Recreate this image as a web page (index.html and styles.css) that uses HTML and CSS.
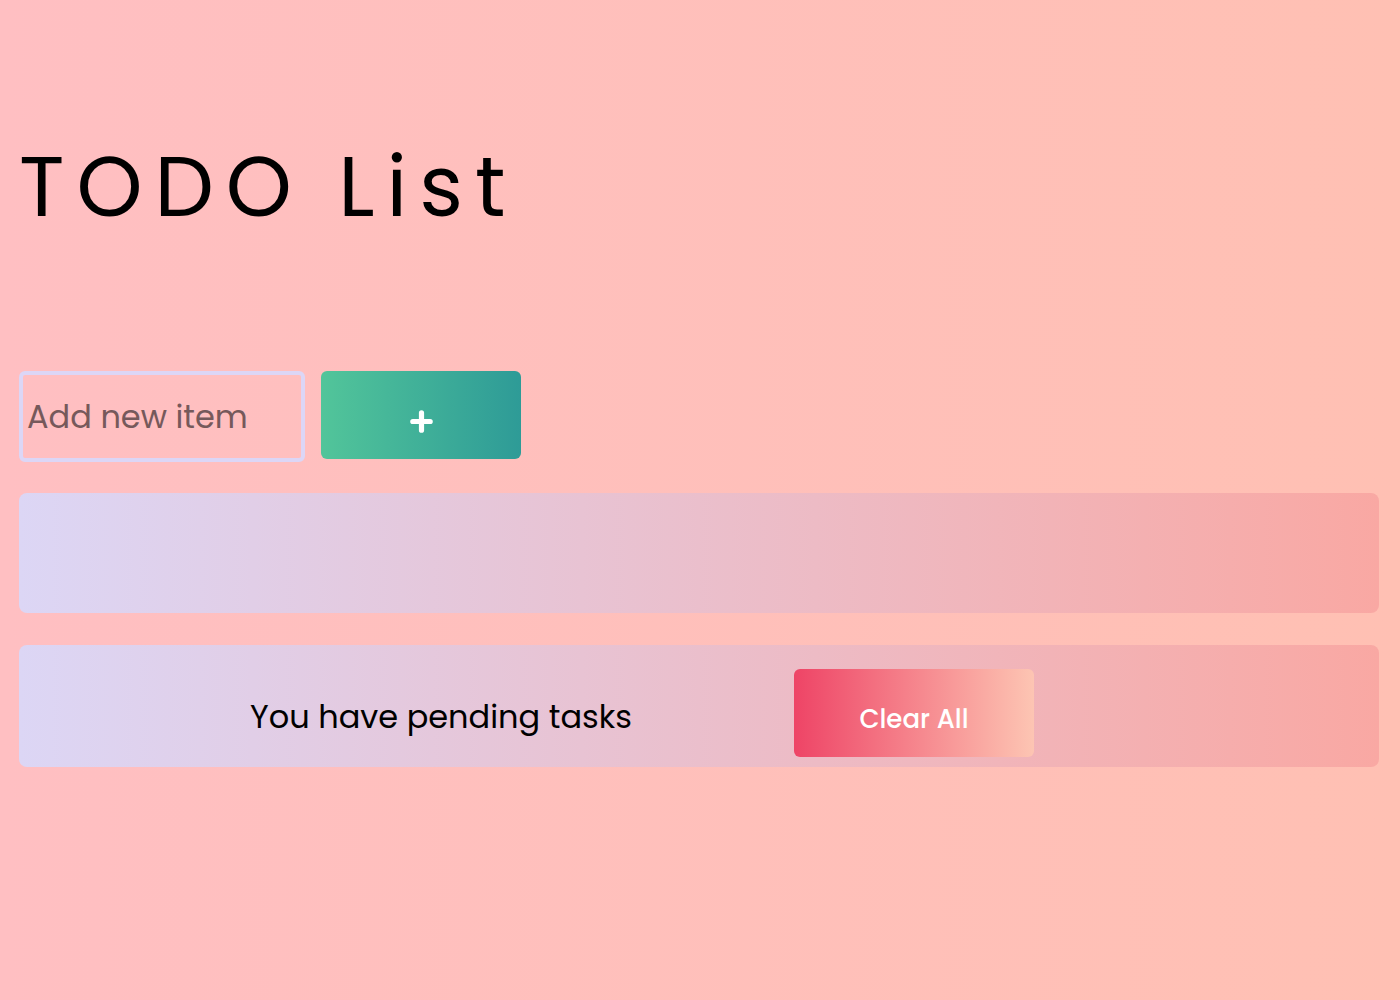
FILE: index.html
```html
<!DOCTYPE html>
<html lang="en">
<head>
<meta charset="utf-8">
<title>TODO List</title>
<link rel="stylesheet" href="styles.css">
</head>
<body>
<main class="app">
  <h1 class="title">TODO List</h1>
  <form class="add-row">
    <input class="add-input" type="text" placeholder="Add new item">
    <button class="add-btn" type="button">
      <svg width="23" height="23" viewBox="0 0 23 23" aria-hidden="true"><path d="M11.5 2.8v17.4M2.8 11.5h17.4" stroke="#fff" stroke-width="5.2" stroke-linecap="round"/></svg>
    </button>
  </form>
  <ul class="list"></ul>
  <div class="footer">
    <span class="pending">You have pending tasks</span>
    <button class="clear-btn" type="button">Clear All</button>
  </div>
</main>
</body>
</html>
```

FILE: styles.css
```css
html, body {
  margin: 0;
  padding: 0;
  min-height: 100%;
}
body {
  min-height: 1000px;
  background: linear-gradient(to right, #ffbfc2, #ffc0b3);
  font-family: Poppins, "Open Sans", "DejaVu Sans", sans-serif;
}
.app {
  padding: 0 21px 0 19px;
}
.title {
  margin: 0;
  padding-top: 132px;
  font-size: 84px;
  line-height: 110px;
  font-weight: 400;
  letter-spacing: 12px;
  color: #000;
}
.add-row {
  display: flex;
  gap: 16px;
  margin-top: 129px;
  align-items: flex-start;
}
.add-input {
  box-sizing: border-box;
  width: 286px;
  height: 91px;
  border: 4px solid #dcd6f6;
  border-radius: 6px;
  background: transparent;
  padding: 0 4px;
  font-family: inherit;
  font-size: 32px;
  color: #000;
  outline: none;
}
.add-input::placeholder {
  color: #76595b;
}
.add-btn {
  width: 200px;
  height: 88px;
  border: none;
  border-radius: 6px;
  background: linear-gradient(to right, #52c59a, #2e9b97);
  display: flex;
  align-items: center;
  justify-content: center;
  padding: 13px 0 0 0;
}
.list {
  list-style: none;
  margin: 31px 0 0 0;
  padding: 0;
  height: 120px;
  border-radius: 8px;
  background: linear-gradient(to right, #dcd6f5, #f9a8a3);
}
.footer {
  margin-top: 32px;
  height: 122px;
  border-radius: 8px;
  background: linear-gradient(to right, #dcd6f5, #f9a8a3);
  display: flex;
  align-items: flex-start;
  padding-left: 231px;
  box-sizing: border-box;
}
.pending {
  width: 544px;
  flex-shrink: 0;
  font-size: 32px;
  line-height: 48px;
  margin-top: 48px;
  color: #000;
}
.clear-btn {
  width: 240px;
  height: 88px;
  margin-top: 24px;
  border: none;
  border-radius: 6px;
  background: linear-gradient(to right, #ee4466, #fdc5b3);
  color: #fff;
  font-family: inherit;
  font-size: 26px;
  font-weight: 500;
  padding: 12px 0 0 0;
}
```
